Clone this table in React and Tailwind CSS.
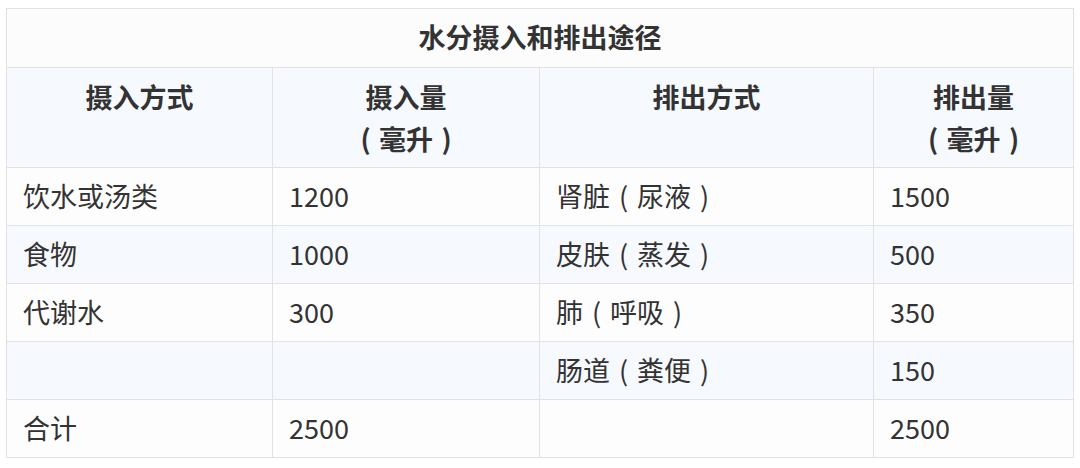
function P({ c }) {
  return <span className="inline-block w-[1em] text-center">{c}</span>;
}

function T({ s }) {
  const parts = [];
  let buf = "";
  for (const ch of s) {
    if (ch === "（" || ch === "）") {
      if (buf) parts.push(buf);
      buf = "";
      parts.push(<P key={parts.length} c={ch === "（" ? "(" : ")"} />);
    } else buf += ch;
  }
  if (buf) parts.push(buf);
  return <>{parts}</>;
}

export default function App() {
  const rows = [
    ["饮水或汤类", "1200", "肾脏（尿液）", "1500"],
    ["食物", "1000", "皮肤（蒸发）", "500"],
    ["代谢水", "300", "肺（呼吸）", "350"],
    ["", "", "肠道（粪便）", "150"],
    ["合计", "2500", "", "2500"],
  ];
  const cell = "border border-[#e2e2e2] px-4 text-left align-middle";
  const head = "border border-[#e2e2e2] text-center align-top pt-[8px] font-bold leading-[42px]";
  return (
    <div
      className="w-[1080px] h-[468px] bg-white pt-[8px] pl-[6px]"
      style={{ fontFamily: '"Noto Sans CJK SC", sans-serif' }}
    >
      <table className="border-collapse table-fixed w-[1067px] text-[#333333] text-[27px]">
        <colgroup>
          <col className="w-[266px]" />
          <col className="w-[267px]" />
          <col className="w-[334px]" />
          <col className="w-[200px]" />
        </colgroup>
        <tbody>
          <tr className="h-[59px] bg-[#fcfcfc]">
            <td colSpan={4} className="border border-[#e2e2e2] text-center font-bold pb-[2px]">
              水分摄入和排出途径
            </td>
          </tr>
          <tr className="h-[100px] bg-[#f6f9fe]">
            <td className={head}>摄入方式</td>
            <td className={head}>
              摄入量<br /><T s="（毫升）" />
            </td>
            <td className={head}>排出方式</td>
            <td className={head}>
              排出量<br /><T s="（毫升）" />
            </td>
          </tr>
          {rows.map((r, i) => (
            <tr key={i} className={"h-[58px] " + (i % 2 === 1 ? "bg-[#f6f9fe]" : "bg-[#fdfdfd]")}>
              {r.map((c, j) => (
                <td key={j} className={cell}>
                  <T s={c} />
                </td>
              ))}
            </tr>
          ))}
        </tbody>
      </table>
    </div>
  );
}
